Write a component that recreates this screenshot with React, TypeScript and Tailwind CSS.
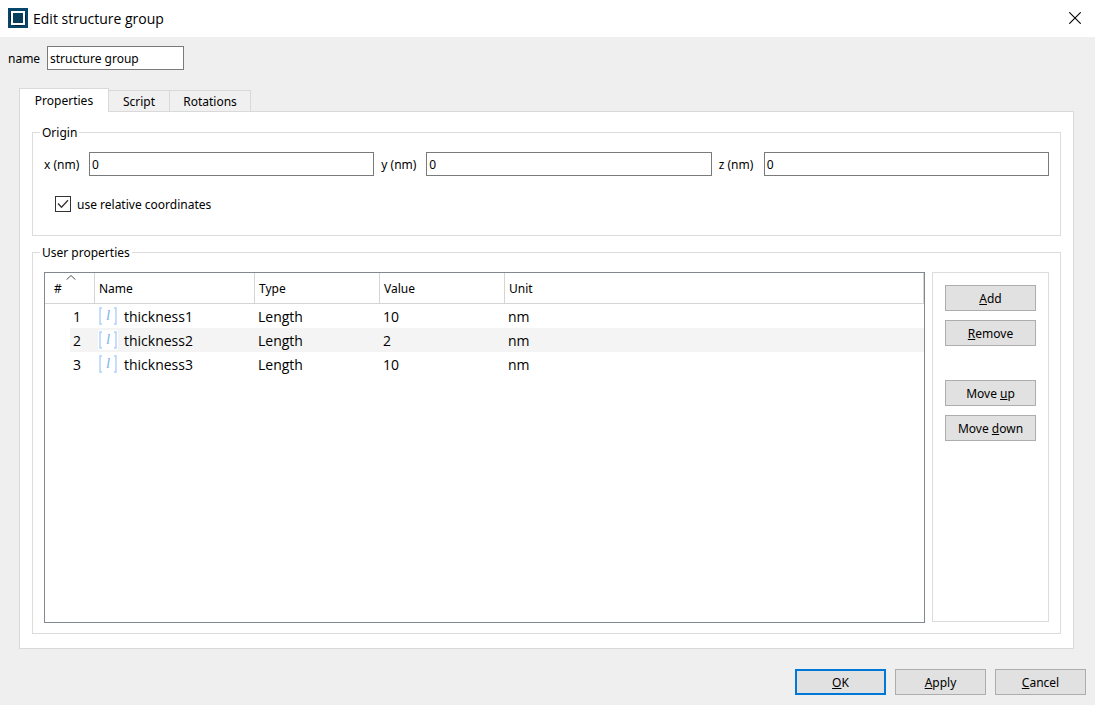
import { useId, useState } from "react";
import type { ReactNode } from "react";

type Property = { id: number; name: string; type: string; value: string; unit: string };

const properties: Property[] = [
  { id: 1, name: "thickness1", type: "Length", value: "10", unit: "nm" },
  { id: 2, name: "thickness2", type: "Length", value: "2", unit: "nm" },
  { id: 3, name: "thickness3", type: "Length", value: "10", unit: "nm" },
];

function AppLogo() {
  return (
    <svg width="20" height="20" viewBox="0 0 20 20" aria-hidden="true">
      <rect width="20" height="20" fill="#05466a" />
      <path d="M3 3H17V5L18 8V13L16 17L12 18H8L4 17L2 13V7Z" fill="#06202f" />
      <rect x="4" y="4" width="12" height="12" fill="#0a3f5c" stroke="#ffffff" strokeWidth="2" />
    </svg>
  );
}

function CloseIcon() {
  return (
    <svg width="12" height="12" viewBox="0 0 12 12" aria-hidden="true">
      <path d="M0.3 0.3L11.7 11.7M11.7 0.3L0.3 11.7" stroke="#000" strokeWidth="1.1" />
    </svg>
  );
}

function LengthIcon() {
  return (
    <svg width="20" height="20" viewBox="0 0 20 20" aria-hidden="true">
      <rect width="20" height="20" fill="#fff" />
      <path d="M4 2H2V18H4M16 2H18V18H16" fill="none" stroke="#a9cdf8" strokeWidth="1.3" />
      <text x="8" y="14" fontFamily="Liberation Serif, serif" fontStyle="italic" fontSize="15" fill="#7fb2f0">
        l
      </text>
    </svg>
  );
}

function PushButton({ children, primary = false }: { children: ReactNode; primary?: boolean }) {
  return (
    <button
      type="button"
      className={
        primary
          ? "h-[26px] w-[91px] border-2 border-[#0078d7] bg-[#e1e1e1] pt-0.5"
          : "h-[26px] w-[91px] border border-[#adadad] bg-[#e1e1e1] pt-0.5"
      }
    >
      {children}
    </button>
  );
}

function Group({ title, className, children }: { title: string; className: string; children: ReactNode }) {
  const titleId = useId();
  return (
    <div
      role="group"
      aria-labelledby={titleId}
      className={`mt-2 flex flex-col border border-[#dcdcdc] px-[7px] ${className}`}
    >
      <div id={titleId} className="-mt-2 h-4 self-start bg-white px-0.5 leading-4">
        {title}
      </div>
      {children}
    </div>
  );
}

function Coordinate({ axis }: { axis: string }) {
  return (
    <div className="flex flex-1 items-center gap-[7px]">
      <label htmlFor={`origin-${axis}`} className="w-[38px] pt-0.5 whitespace-nowrap">
        {axis} (nm)
      </label>
      <input
        id={`origin-${axis}`}
        defaultValue="0"
        className="h-6 min-w-0 flex-1 border border-[#7a7a7a] bg-white px-0.5 outline-none"
      />
    </div>
  );
}

export default function App() {
  const [relative, setRelative] = useState(true);

  return (
    <div className="flex min-h-screen flex-col bg-[#efefef] font-['Noto_Sans',sans-serif] text-[12px] text-black">
      <header className="flex h-[37px] items-center bg-white pr-[14px] pb-px pl-2">
        <AppLogo />
        <h1 className="ml-[5px] flex-1 pt-px font-['Open_Sans',sans-serif] text-[14px]">Edit structure group</h1>
        <button type="button" aria-label="Close">
          <CloseIcon />
        </button>
      </header>

      <main className="flex flex-1 flex-col">
        <div className="flex items-center gap-[7px] px-2 pt-[9px]">
          <label htmlFor="group-name" className="w-8 pt-0.5">
            name
          </label>
          <input
            id="group-name"
            defaultValue="structure group"
            className="h-6 w-[137px] border border-[#7a7a7a] bg-white px-0.5 outline-none"
          />
        </div>

        <div className="flex flex-1 flex-col pt-[18px] pr-[21px] pl-[19px]">
          <div role="tablist" className="z-10 -mb-px flex items-end">
            <button
              type="button"
              role="tab"
              aria-selected="true"
              className="h-6 w-[90px] border border-b-0 border-[#d9d9d9] bg-white"
            >
              Properties
            </button>
            <button
              type="button"
              role="tab"
              aria-selected="false"
              className="h-[22px] w-[61px] border border-l-0 border-[#d9d9d9] bg-[#f0f0f0] pt-0.5"
            >
              Script
            </button>
            <button
              type="button"
              role="tab"
              aria-selected="false"
              className="h-[22px] w-[81px] border border-l-0 border-[#d9d9d9] bg-[#f0f0f0] pt-0.5"
            >
              Rotations
            </button>
          </div>

          <section
            role="tabpanel"
            className="flex flex-1 flex-col gap-2 border border-[#d9d9d9] bg-white px-3 pt-3 pb-[14px]"
          >
            <Group title="Origin" className="pb-[23px]">
              <div className="flex flex-col gap-5 px-1 pt-[11px]">
                <div className="flex gap-[7px]">
                  <Coordinate axis="x" />
                  <Coordinate axis="y" />
                  <Coordinate axis="z" />
                </div>
                <label className="ml-[11px] flex h-4 items-center gap-1.5 self-start">
                  <span className="grid size-4 place-items-center">
                    <input
                      type="checkbox"
                      checked={relative}
                      onChange={(e) => setRelative(e.target.checked)}
                      className="peer col-start-1 row-start-1 size-4 appearance-none border border-[#333] bg-white"
                    />
                    <svg
                      className="pointer-events-none invisible col-start-1 row-start-1 peer-checked:visible"
                      width="12"
                      height="10"
                      viewBox="0 0 12 10"
                      aria-hidden="true"
                    >
                      <path d="M1 4.5L4.5 8.3L11 1.3" fill="none" stroke="#333" strokeWidth="1.3" />
                    </svg>
                  </span>
                  <span className="pt-0.5">use relative coordinates</span>
                </label>
              </div>
            </Group>

            <Group title="User properties" className="flex-1 pb-[10px]">
              <div className="flex flex-1 gap-[7px] px-1 pt-[11px]">
                <div className="min-w-0 flex-1 border border-[#828790]">
                  <table className="w-full table-fixed border-separate border-spacing-0 text-left">
                    <colgroup>
                      <col className="w-[50px]" />
                      <col className="w-[160px]" />
                      <col className="w-[125px]" />
                      <col className="w-[125px]" />
                      <col />
                    </colgroup>
                    <thead>
                      <tr className="h-[31px] *:border-r *:border-b *:border-[#d5d5d5] *:pt-0.5 *:font-normal">
                        <th aria-sort="ascending" className="relative pl-[9px]">
                          #
                          <svg
                            className="absolute top-0.5 left-[21px]"
                            width="10"
                            height="5"
                            viewBox="0 0 10 5"
                            aria-hidden="true"
                          >
                            <path d="M0.5 4.7L5 0.5L9.5 4.7" fill="none" stroke="#555" />
                          </svg>
                        </th>
                        <th className="pl-1">Name</th>
                        <th className="pl-1">Type</th>
                        <th className="pl-1">Value</th>
                        <th className="pl-1">Unit</th>
                      </tr>
                    </thead>
                    <tbody className="font-['Open_Sans',sans-serif] text-[14px] leading-[26px]">
                      {properties.map((p) => (
                        <tr key={p.id} className="group h-6 *:p-0">
                          <td>
                            <div className="ml-[25px] h-6 pr-[14px] text-right group-even:bg-[#f4f4f4]">{p.id}</div>
                          </td>
                          <td className="group-even:bg-[#f4f4f4]">
                            <div className="flex h-6 items-center gap-1.5 pl-[3px]">
                              <LengthIcon />
                              <span className="h-6">{p.name}</span>
                            </div>
                          </td>
                          <td className="group-even:bg-[#f4f4f4]">
                            <div className="h-6 pl-[3px]">{p.type}</div>
                          </td>
                          <td className="group-even:bg-[#f4f4f4]">
                            <div className="h-6 pl-[3px]">{p.value}</div>
                          </td>
                          <td className="group-even:bg-[#f4f4f4]">
                            <div className="h-6 pl-[3px]">{p.unit}</div>
                          </td>
                        </tr>
                      ))}
                    </tbody>
                  </table>
                </div>

                <div className="mb-px flex flex-col gap-[34px] border border-[#dcdcdc] p-3">
                  <div className="flex flex-col gap-[9px]">
                    <PushButton>
                      <u>A</u>dd
                    </PushButton>
                    <PushButton>
                      <u>R</u>emove
                    </PushButton>
                  </div>
                  <div className="flex flex-col gap-[9px]">
                    <PushButton>
                      Move <u>u</u>p
                    </PushButton>
                    <PushButton>
                      Move <u>d</u>own
                    </PushButton>
                  </div>
                </div>
              </div>
            </Group>
          </section>
        </div>
      </main>

      <footer className="flex justify-end gap-[9px] pt-5 pr-[9px] pb-[10px]">
        <PushButton primary>
          <u>O</u>K
        </PushButton>
        <PushButton>
          <u>A</u>pply
        </PushButton>
        <PushButton>
          <u>C</u>ancel
        </PushButton>
      </footer>
    </div>
  );
}
